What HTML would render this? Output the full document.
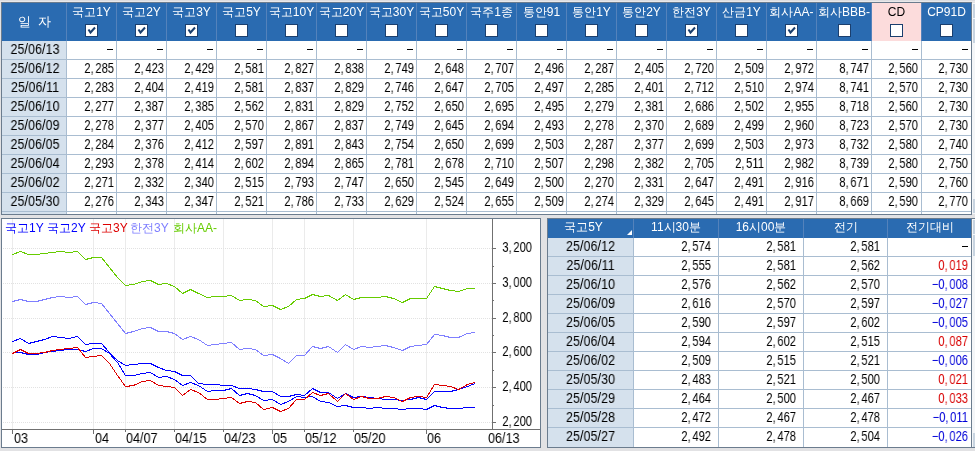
<!DOCTYPE html>
<html><head><meta charset="utf-8"><style>
*{margin:0;padding:0;box-sizing:border-box}
html,body{width:975px;height:451px;overflow:hidden;background:#e2e2e4;font-family:"Liberation Sans",sans-serif;font-size:13px;color:#000}
.a{position:absolute}
.t,.n,.dt{will-change:transform}
.t{position:absolute;white-space:nowrap;line-height:13px}
.n{position:absolute;white-space:nowrap;line-height:14px;font-size:14px;text-align:right;transform:scaleX(.8);transform-origin:100% 50%}
.dt{position:absolute;white-space:nowrap;line-height:14px;font-size:14px;text-align:center;transform:scaleX(.9);transform-origin:50% 50%}
.dash{position:absolute;width:6px;height:1px;background:#000}
.n i{display:inline-block;width:2px}
.hd{color:#fff}
.cb{position:absolute;width:13px;height:13px;background:#fff;border:1px solid #1b3f6e}
</style></head><body>

<div class="a" style="left:0;top:0;width:975px;height:1px;background:#dcdde1"></div>
<div class="a" style="left:0;top:1px;width:975px;height:1px;background:#e9e9eb"></div>
<div class="a" style="left:1px;top:2px;width:971px;height:213px;background:#6b7c8e"></div>
<div class="a" style="left:2px;top:3px;width:969px;height:211px;background:#fff"></div>
<div class="a" style="left:2px;top:3px;width:969px;height:38px;background:#2a6bb1"></div>
<div class="a" style="left:2px;top:41px;width:64px;height:173px;background:#d5e1ed"></div>
<div class="a" style="left:872px;top:3px;width:49px;height:38px;background:#fcdcdc"></div>
<div class="a" style="left:66px;top:3px;width:1px;height:38px;background:#5482bb"></div>
<div class="a" style="left:66px;top:41px;width:1px;height:173px;background:#a9bdd1"></div>
<div class="a" style="left:116px;top:3px;width:1px;height:38px;background:#5482bb"></div>
<div class="a" style="left:116px;top:41px;width:1px;height:173px;background:#a9bdd1"></div>
<div class="a" style="left:166px;top:3px;width:1px;height:38px;background:#5482bb"></div>
<div class="a" style="left:166px;top:41px;width:1px;height:173px;background:#a9bdd1"></div>
<div class="a" style="left:216px;top:3px;width:1px;height:38px;background:#5482bb"></div>
<div class="a" style="left:216px;top:41px;width:1px;height:173px;background:#a9bdd1"></div>
<div class="a" style="left:266px;top:3px;width:1px;height:38px;background:#5482bb"></div>
<div class="a" style="left:266px;top:41px;width:1px;height:173px;background:#a9bdd1"></div>
<div class="a" style="left:316px;top:3px;width:1px;height:38px;background:#5482bb"></div>
<div class="a" style="left:316px;top:41px;width:1px;height:173px;background:#a9bdd1"></div>
<div class="a" style="left:366px;top:3px;width:1px;height:38px;background:#5482bb"></div>
<div class="a" style="left:366px;top:41px;width:1px;height:173px;background:#a9bdd1"></div>
<div class="a" style="left:416px;top:3px;width:1px;height:38px;background:#5482bb"></div>
<div class="a" style="left:416px;top:41px;width:1px;height:173px;background:#a9bdd1"></div>
<div class="a" style="left:466px;top:3px;width:1px;height:38px;background:#5482bb"></div>
<div class="a" style="left:466px;top:41px;width:1px;height:173px;background:#a9bdd1"></div>
<div class="a" style="left:516px;top:3px;width:1px;height:38px;background:#5482bb"></div>
<div class="a" style="left:516px;top:41px;width:1px;height:173px;background:#a9bdd1"></div>
<div class="a" style="left:566px;top:3px;width:1px;height:38px;background:#5482bb"></div>
<div class="a" style="left:566px;top:41px;width:1px;height:173px;background:#a9bdd1"></div>
<div class="a" style="left:616px;top:3px;width:1px;height:38px;background:#5482bb"></div>
<div class="a" style="left:616px;top:41px;width:1px;height:173px;background:#a9bdd1"></div>
<div class="a" style="left:666px;top:3px;width:1px;height:38px;background:#5482bb"></div>
<div class="a" style="left:666px;top:41px;width:1px;height:173px;background:#a9bdd1"></div>
<div class="a" style="left:716px;top:3px;width:1px;height:38px;background:#5482bb"></div>
<div class="a" style="left:716px;top:41px;width:1px;height:173px;background:#a9bdd1"></div>
<div class="a" style="left:766px;top:3px;width:1px;height:38px;background:#5482bb"></div>
<div class="a" style="left:766px;top:41px;width:1px;height:173px;background:#a9bdd1"></div>
<div class="a" style="left:816px;top:3px;width:1px;height:38px;background:#5482bb"></div>
<div class="a" style="left:816px;top:41px;width:1px;height:173px;background:#a9bdd1"></div>
<div class="a" style="left:871px;top:3px;width:1px;height:38px;background:#5482bb"></div>
<div class="a" style="left:871px;top:41px;width:1px;height:173px;background:#a9bdd1"></div>
<div class="a" style="left:921px;top:3px;width:1px;height:38px;background:#5482bb"></div>
<div class="a" style="left:921px;top:41px;width:1px;height:173px;background:#a9bdd1"></div>
<div class="a" style="left:2px;top:59px;width:969px;height:1px;background:#a9bdd1"></div>
<div class="a" style="left:2px;top:78px;width:969px;height:1px;background:#a9bdd1"></div>
<div class="a" style="left:2px;top:97px;width:969px;height:1px;background:#a9bdd1"></div>
<div class="a" style="left:2px;top:116px;width:969px;height:1px;background:#a9bdd1"></div>
<div class="a" style="left:2px;top:135px;width:969px;height:1px;background:#a9bdd1"></div>
<div class="a" style="left:2px;top:154px;width:969px;height:1px;background:#a9bdd1"></div>
<div class="a" style="left:2px;top:173px;width:969px;height:1px;background:#a9bdd1"></div>
<div class="a" style="left:2px;top:192px;width:969px;height:1px;background:#a9bdd1"></div>
<div class="a" style="left:2px;top:211px;width:969px;height:1px;background:#a9bdd1"></div>
<div class="t hd" style="left:18px;top:15px;font-size:13px;letter-spacing:0">일&nbsp;&nbsp;자</div>
<div class="t" style="left:67px;top:6px;width:49px;text-align:center;color:#fff;font-size:12px">국고1Y</div>
<div class="cb" style="left:85px;top:24px"></div>
<svg class="a" style="left:85px;top:24px" width="13" height="13" viewBox="0 0 13 13"><path d="M3.5 5.5 L5.5 8.5 L10 3.5" fill="none" stroke="#1b3f6e" stroke-width="2"/></svg>
<div class="t" style="left:117px;top:6px;width:49px;text-align:center;color:#fff;font-size:12px">국고2Y</div>
<div class="cb" style="left:135px;top:24px"></div>
<svg class="a" style="left:135px;top:24px" width="13" height="13" viewBox="0 0 13 13"><path d="M3.5 5.5 L5.5 8.5 L10 3.5" fill="none" stroke="#1b3f6e" stroke-width="2"/></svg>
<div class="t" style="left:167px;top:6px;width:49px;text-align:center;color:#fff;font-size:12px">국고3Y</div>
<div class="cb" style="left:185px;top:24px"></div>
<svg class="a" style="left:185px;top:24px" width="13" height="13" viewBox="0 0 13 13"><path d="M3.5 5.5 L5.5 8.5 L10 3.5" fill="none" stroke="#1b3f6e" stroke-width="2"/></svg>
<div class="t" style="left:217px;top:6px;width:49px;text-align:center;color:#fff;font-size:12px">국고5Y</div>
<div class="cb" style="left:235px;top:24px"></div>
<div class="t" style="left:267px;top:6px;width:49px;text-align:center;color:#fff;font-size:12px">국고10Y</div>
<div class="cb" style="left:285px;top:24px"></div>
<div class="t" style="left:317px;top:6px;width:49px;text-align:center;color:#fff;font-size:12px">국고20Y</div>
<div class="cb" style="left:335px;top:24px"></div>
<div class="t" style="left:367px;top:6px;width:49px;text-align:center;color:#fff;font-size:12px">국고30Y</div>
<div class="cb" style="left:385px;top:24px"></div>
<div class="t" style="left:417px;top:6px;width:49px;text-align:center;color:#fff;font-size:12px">국고50Y</div>
<div class="cb" style="left:435px;top:24px"></div>
<div class="t" style="left:467px;top:6px;width:49px;text-align:center;color:#fff;font-size:12px">국주1종</div>
<div class="cb" style="left:485px;top:24px"></div>
<div class="t" style="left:517px;top:6px;width:49px;text-align:center;color:#fff;font-size:12px">통안91</div>
<div class="cb" style="left:535px;top:24px"></div>
<div class="t" style="left:567px;top:6px;width:49px;text-align:center;color:#fff;font-size:12px">통안1Y</div>
<div class="cb" style="left:585px;top:24px"></div>
<div class="t" style="left:617px;top:6px;width:49px;text-align:center;color:#fff;font-size:12px">통안2Y</div>
<div class="cb" style="left:635px;top:24px"></div>
<div class="t" style="left:667px;top:6px;width:49px;text-align:center;color:#fff;font-size:12px">한전3Y</div>
<div class="cb" style="left:685px;top:24px"></div>
<svg class="a" style="left:685px;top:24px" width="13" height="13" viewBox="0 0 13 13"><path d="M3.5 5.5 L5.5 8.5 L10 3.5" fill="none" stroke="#1b3f6e" stroke-width="2"/></svg>
<div class="t" style="left:717px;top:6px;width:49px;text-align:center;color:#fff;font-size:12px">산금1Y</div>
<div class="cb" style="left:735px;top:24px"></div>
<div class="t" style="left:767px;top:6px;width:49px;text-align:center;color:#fff;font-size:12px">회사AA-</div>
<div class="cb" style="left:785px;top:24px"></div>
<svg class="a" style="left:785px;top:24px" width="13" height="13" viewBox="0 0 13 13"><path d="M3.5 5.5 L5.5 8.5 L10 3.5" fill="none" stroke="#1b3f6e" stroke-width="2"/></svg>
<div class="t" style="left:817px;top:6px;width:54px;text-align:center;color:#fff;font-size:12px">회사BBB-</div>
<div class="cb" style="left:838px;top:24px"></div>
<div class="t" style="left:872px;top:6px;width:49px;text-align:center;color:#000;font-size:12px">CD</div>
<div class="cb" style="left:890px;top:24px"></div>
<div class="t" style="left:922px;top:6px;width:49px;text-align:center;color:#fff;font-size:12px">CP91D</div>
<div class="cb" style="left:940px;top:24px"></div>
<div class="dt" style="left:3px;top:42px;width:64px">25/06/13</div>
<div class="dash" style="left:107px;top:49px"></div>
<div class="dash" style="left:157px;top:49px"></div>
<div class="dash" style="left:207px;top:49px"></div>
<div class="dash" style="left:257px;top:49px"></div>
<div class="dash" style="left:307px;top:49px"></div>
<div class="dash" style="left:357px;top:49px"></div>
<div class="dash" style="left:407px;top:49px"></div>
<div class="dash" style="left:457px;top:49px"></div>
<div class="dash" style="left:507px;top:49px"></div>
<div class="dash" style="left:557px;top:49px"></div>
<div class="dash" style="left:607px;top:49px"></div>
<div class="dash" style="left:657px;top:49px"></div>
<div class="dash" style="left:707px;top:49px"></div>
<div class="dash" style="left:757px;top:49px"></div>
<div class="dash" style="left:807px;top:49px"></div>
<div class="dash" style="left:862px;top:49px"></div>
<div class="dash" style="left:912px;top:49px"></div>
<div class="dash" style="left:962px;top:49px"></div>
<div class="dt" style="left:3px;top:61px;width:64px">25/06/12</div>
<div class="n" style="left:58px;top:61px;width:56px">2,<i></i>285</div>
<div class="n" style="left:108px;top:61px;width:56px">2,<i></i>423</div>
<div class="n" style="left:158px;top:61px;width:56px">2,<i></i>429</div>
<div class="n" style="left:208px;top:61px;width:56px">2,<i></i>581</div>
<div class="n" style="left:258px;top:61px;width:56px">2,<i></i>827</div>
<div class="n" style="left:308px;top:61px;width:56px">2,<i></i>838</div>
<div class="n" style="left:358px;top:61px;width:56px">2,<i></i>749</div>
<div class="n" style="left:408px;top:61px;width:56px">2,<i></i>648</div>
<div class="n" style="left:458px;top:61px;width:56px">2,<i></i>707</div>
<div class="n" style="left:508px;top:61px;width:56px">2,<i></i>496</div>
<div class="n" style="left:558px;top:61px;width:56px">2,<i></i>287</div>
<div class="n" style="left:608px;top:61px;width:56px">2,<i></i>405</div>
<div class="n" style="left:658px;top:61px;width:56px">2,<i></i>720</div>
<div class="n" style="left:708px;top:61px;width:56px">2,<i></i>509</div>
<div class="n" style="left:758px;top:61px;width:56px">2,<i></i>972</div>
<div class="n" style="left:813px;top:61px;width:56px">8,<i></i>747</div>
<div class="n" style="left:862px;top:61px;width:56px">2,<i></i>560</div>
<div class="n" style="left:912px;top:61px;width:56px">2,<i></i>730</div>
<div class="dt" style="left:3px;top:80px;width:64px">25/06/11</div>
<div class="n" style="left:58px;top:80px;width:56px">2,<i></i>283</div>
<div class="n" style="left:108px;top:80px;width:56px">2,<i></i>404</div>
<div class="n" style="left:158px;top:80px;width:56px">2,<i></i>419</div>
<div class="n" style="left:208px;top:80px;width:56px">2,<i></i>581</div>
<div class="n" style="left:258px;top:80px;width:56px">2,<i></i>837</div>
<div class="n" style="left:308px;top:80px;width:56px">2,<i></i>829</div>
<div class="n" style="left:358px;top:80px;width:56px">2,<i></i>746</div>
<div class="n" style="left:408px;top:80px;width:56px">2,<i></i>647</div>
<div class="n" style="left:458px;top:80px;width:56px">2,<i></i>705</div>
<div class="n" style="left:508px;top:80px;width:56px">2,<i></i>497</div>
<div class="n" style="left:558px;top:80px;width:56px">2,<i></i>285</div>
<div class="n" style="left:608px;top:80px;width:56px">2,<i></i>401</div>
<div class="n" style="left:658px;top:80px;width:56px">2,<i></i>712</div>
<div class="n" style="left:708px;top:80px;width:56px">2,<i></i>510</div>
<div class="n" style="left:758px;top:80px;width:56px">2,<i></i>974</div>
<div class="n" style="left:813px;top:80px;width:56px">8,<i></i>741</div>
<div class="n" style="left:862px;top:80px;width:56px">2,<i></i>570</div>
<div class="n" style="left:912px;top:80px;width:56px">2,<i></i>730</div>
<div class="dt" style="left:3px;top:99px;width:64px">25/06/10</div>
<div class="n" style="left:58px;top:99px;width:56px">2,<i></i>277</div>
<div class="n" style="left:108px;top:99px;width:56px">2,<i></i>387</div>
<div class="n" style="left:158px;top:99px;width:56px">2,<i></i>385</div>
<div class="n" style="left:208px;top:99px;width:56px">2,<i></i>562</div>
<div class="n" style="left:258px;top:99px;width:56px">2,<i></i>831</div>
<div class="n" style="left:308px;top:99px;width:56px">2,<i></i>829</div>
<div class="n" style="left:358px;top:99px;width:56px">2,<i></i>752</div>
<div class="n" style="left:408px;top:99px;width:56px">2,<i></i>650</div>
<div class="n" style="left:458px;top:99px;width:56px">2,<i></i>695</div>
<div class="n" style="left:508px;top:99px;width:56px">2,<i></i>495</div>
<div class="n" style="left:558px;top:99px;width:56px">2,<i></i>279</div>
<div class="n" style="left:608px;top:99px;width:56px">2,<i></i>381</div>
<div class="n" style="left:658px;top:99px;width:56px">2,<i></i>686</div>
<div class="n" style="left:708px;top:99px;width:56px">2,<i></i>502</div>
<div class="n" style="left:758px;top:99px;width:56px">2,<i></i>955</div>
<div class="n" style="left:813px;top:99px;width:56px">8,<i></i>718</div>
<div class="n" style="left:862px;top:99px;width:56px">2,<i></i>560</div>
<div class="n" style="left:912px;top:99px;width:56px">2,<i></i>730</div>
<div class="dt" style="left:3px;top:118px;width:64px">25/06/09</div>
<div class="n" style="left:58px;top:118px;width:56px">2,<i></i>278</div>
<div class="n" style="left:108px;top:118px;width:56px">2,<i></i>377</div>
<div class="n" style="left:158px;top:118px;width:56px">2,<i></i>405</div>
<div class="n" style="left:208px;top:118px;width:56px">2,<i></i>570</div>
<div class="n" style="left:258px;top:118px;width:56px">2,<i></i>867</div>
<div class="n" style="left:308px;top:118px;width:56px">2,<i></i>837</div>
<div class="n" style="left:358px;top:118px;width:56px">2,<i></i>749</div>
<div class="n" style="left:408px;top:118px;width:56px">2,<i></i>645</div>
<div class="n" style="left:458px;top:118px;width:56px">2,<i></i>694</div>
<div class="n" style="left:508px;top:118px;width:56px">2,<i></i>493</div>
<div class="n" style="left:558px;top:118px;width:56px">2,<i></i>278</div>
<div class="n" style="left:608px;top:118px;width:56px">2,<i></i>370</div>
<div class="n" style="left:658px;top:118px;width:56px">2,<i></i>689</div>
<div class="n" style="left:708px;top:118px;width:56px">2,<i></i>499</div>
<div class="n" style="left:758px;top:118px;width:56px">2,<i></i>960</div>
<div class="n" style="left:813px;top:118px;width:56px">8,<i></i>723</div>
<div class="n" style="left:862px;top:118px;width:56px">2,<i></i>570</div>
<div class="n" style="left:912px;top:118px;width:56px">2,<i></i>730</div>
<div class="dt" style="left:3px;top:137px;width:64px">25/06/05</div>
<div class="n" style="left:58px;top:137px;width:56px">2,<i></i>284</div>
<div class="n" style="left:108px;top:137px;width:56px">2,<i></i>376</div>
<div class="n" style="left:158px;top:137px;width:56px">2,<i></i>412</div>
<div class="n" style="left:208px;top:137px;width:56px">2,<i></i>597</div>
<div class="n" style="left:258px;top:137px;width:56px">2,<i></i>891</div>
<div class="n" style="left:308px;top:137px;width:56px">2,<i></i>843</div>
<div class="n" style="left:358px;top:137px;width:56px">2,<i></i>754</div>
<div class="n" style="left:408px;top:137px;width:56px">2,<i></i>650</div>
<div class="n" style="left:458px;top:137px;width:56px">2,<i></i>699</div>
<div class="n" style="left:508px;top:137px;width:56px">2,<i></i>503</div>
<div class="n" style="left:558px;top:137px;width:56px">2,<i></i>287</div>
<div class="n" style="left:608px;top:137px;width:56px">2,<i></i>377</div>
<div class="n" style="left:658px;top:137px;width:56px">2,<i></i>699</div>
<div class="n" style="left:708px;top:137px;width:56px">2,<i></i>503</div>
<div class="n" style="left:758px;top:137px;width:56px">2,<i></i>973</div>
<div class="n" style="left:813px;top:137px;width:56px">8,<i></i>732</div>
<div class="n" style="left:862px;top:137px;width:56px">2,<i></i>580</div>
<div class="n" style="left:912px;top:137px;width:56px">2,<i></i>740</div>
<div class="dt" style="left:3px;top:156px;width:64px">25/06/04</div>
<div class="n" style="left:58px;top:156px;width:56px">2,<i></i>293</div>
<div class="n" style="left:108px;top:156px;width:56px">2,<i></i>378</div>
<div class="n" style="left:158px;top:156px;width:56px">2,<i></i>414</div>
<div class="n" style="left:208px;top:156px;width:56px">2,<i></i>602</div>
<div class="n" style="left:258px;top:156px;width:56px">2,<i></i>894</div>
<div class="n" style="left:308px;top:156px;width:56px">2,<i></i>865</div>
<div class="n" style="left:358px;top:156px;width:56px">2,<i></i>781</div>
<div class="n" style="left:408px;top:156px;width:56px">2,<i></i>678</div>
<div class="n" style="left:458px;top:156px;width:56px">2,<i></i>710</div>
<div class="n" style="left:508px;top:156px;width:56px">2,<i></i>507</div>
<div class="n" style="left:558px;top:156px;width:56px">2,<i></i>298</div>
<div class="n" style="left:608px;top:156px;width:56px">2,<i></i>382</div>
<div class="n" style="left:658px;top:156px;width:56px">2,<i></i>705</div>
<div class="n" style="left:708px;top:156px;width:56px">2,<i></i>511</div>
<div class="n" style="left:758px;top:156px;width:56px">2,<i></i>982</div>
<div class="n" style="left:813px;top:156px;width:56px">8,<i></i>739</div>
<div class="n" style="left:862px;top:156px;width:56px">2,<i></i>580</div>
<div class="n" style="left:912px;top:156px;width:56px">2,<i></i>750</div>
<div class="dt" style="left:3px;top:175px;width:64px">25/06/02</div>
<div class="n" style="left:58px;top:175px;width:56px">2,<i></i>271</div>
<div class="n" style="left:108px;top:175px;width:56px">2,<i></i>332</div>
<div class="n" style="left:158px;top:175px;width:56px">2,<i></i>340</div>
<div class="n" style="left:208px;top:175px;width:56px">2,<i></i>515</div>
<div class="n" style="left:258px;top:175px;width:56px">2,<i></i>793</div>
<div class="n" style="left:308px;top:175px;width:56px">2,<i></i>747</div>
<div class="n" style="left:358px;top:175px;width:56px">2,<i></i>650</div>
<div class="n" style="left:408px;top:175px;width:56px">2,<i></i>545</div>
<div class="n" style="left:458px;top:175px;width:56px">2,<i></i>649</div>
<div class="n" style="left:508px;top:175px;width:56px">2,<i></i>500</div>
<div class="n" style="left:558px;top:175px;width:56px">2,<i></i>270</div>
<div class="n" style="left:608px;top:175px;width:56px">2,<i></i>331</div>
<div class="n" style="left:658px;top:175px;width:56px">2,<i></i>647</div>
<div class="n" style="left:708px;top:175px;width:56px">2,<i></i>491</div>
<div class="n" style="left:758px;top:175px;width:56px">2,<i></i>916</div>
<div class="n" style="left:813px;top:175px;width:56px">8,<i></i>671</div>
<div class="n" style="left:862px;top:175px;width:56px">2,<i></i>590</div>
<div class="n" style="left:912px;top:175px;width:56px">2,<i></i>760</div>
<div class="dt" style="left:3px;top:194px;width:64px">25/05/30</div>
<div class="n" style="left:58px;top:194px;width:56px">2,<i></i>276</div>
<div class="n" style="left:108px;top:194px;width:56px">2,<i></i>343</div>
<div class="n" style="left:158px;top:194px;width:56px">2,<i></i>347</div>
<div class="n" style="left:208px;top:194px;width:56px">2,<i></i>521</div>
<div class="n" style="left:258px;top:194px;width:56px">2,<i></i>786</div>
<div class="n" style="left:308px;top:194px;width:56px">2,<i></i>733</div>
<div class="n" style="left:358px;top:194px;width:56px">2,<i></i>629</div>
<div class="n" style="left:408px;top:194px;width:56px">2,<i></i>524</div>
<div class="n" style="left:458px;top:194px;width:56px">2,<i></i>655</div>
<div class="n" style="left:508px;top:194px;width:56px">2,<i></i>509</div>
<div class="n" style="left:558px;top:194px;width:56px">2,<i></i>274</div>
<div class="n" style="left:608px;top:194px;width:56px">2,<i></i>329</div>
<div class="n" style="left:658px;top:194px;width:56px">2,<i></i>645</div>
<div class="n" style="left:708px;top:194px;width:56px">2,<i></i>491</div>
<div class="n" style="left:758px;top:194px;width:56px">2,<i></i>917</div>
<div class="n" style="left:813px;top:194px;width:56px">8,<i></i>669</div>
<div class="n" style="left:862px;top:194px;width:56px">2,<i></i>590</div>
<div class="n" style="left:912px;top:194px;width:56px">2,<i></i>770</div>
<div class="a" style="left:972px;top:3px;width:3px;height:211px;background:#f4f6f8"></div>
<div class="a" style="left:973px;top:4px;width:2px;height:14px;background:#c8d4e0"></div>
<div class="a" style="left:973px;top:19px;width:2px;height:24px;background:#c8d4e0"></div>
<div class="a" style="left:973px;top:199px;width:2px;height:14px;background:#c8d4e0"></div>
<div class="a" style="left:1px;top:218px;width:540px;height:230px;background:#6b7c8e"></div>
<div class="a" style="left:2px;top:219px;width:538px;height:228px;background:#fff"></div>
<svg class="a" style="left:0;top:0" width="975" height="451" viewBox="0 0 975 451">
<rect x="12" y="219" width="1" height="210" fill="#ebebeb"/>
<rect x="93" y="219" width="1" height="210" fill="#ebebeb"/>
<rect x="125" y="219" width="1" height="210" fill="#ebebeb"/>
<rect x="174" y="219" width="1" height="210" fill="#ebebeb"/>
<rect x="223" y="219" width="1" height="210" fill="#ebebeb"/>
<rect x="272" y="219" width="1" height="210" fill="#ebebeb"/>
<rect x="304" y="219" width="1" height="210" fill="#ebebeb"/>
<rect x="353" y="219" width="1" height="210" fill="#ebebeb"/>
<rect x="426" y="219" width="1" height="210" fill="#ebebeb"/>
<line x1="2" y1="248.5" x2="492" y2="248.5" stroke="#e2e2e2" stroke-width="1" stroke-dasharray="1 1" stroke-dashoffset="1" shape-rendering="crispEdges"/>
<line x1="2" y1="283.5" x2="492" y2="283.5" stroke="#e2e2e2" stroke-width="1" stroke-dasharray="1 1" stroke-dashoffset="1" shape-rendering="crispEdges"/>
<line x1="2" y1="318.5" x2="492" y2="318.5" stroke="#e2e2e2" stroke-width="1" stroke-dasharray="1 1" stroke-dashoffset="1" shape-rendering="crispEdges"/>
<line x1="2" y1="352.5" x2="492" y2="352.5" stroke="#e2e2e2" stroke-width="1" stroke-dasharray="1 1" stroke-dashoffset="1" shape-rendering="crispEdges"/>
<line x1="2" y1="387.5" x2="492" y2="387.5" stroke="#e2e2e2" stroke-width="1" stroke-dasharray="1 1" stroke-dashoffset="1" shape-rendering="crispEdges"/>
<line x1="2" y1="422.5" x2="492" y2="422.5" stroke="#e2e2e2" stroke-width="1" stroke-dasharray="1 1" stroke-dashoffset="1" shape-rendering="crispEdges"/>
<rect x="492" y="219" width="1" height="211" fill="#707070"/>
<rect x="2" y="429" width="538" height="1" fill="#707070"/>
<rect x="493" y="248" width="3" height="1" fill="#707070"/>
<rect x="493" y="283" width="3" height="1" fill="#707070"/>
<rect x="493" y="318" width="3" height="1" fill="#707070"/>
<rect x="493" y="352" width="3" height="1" fill="#707070"/>
<rect x="493" y="387" width="3" height="1" fill="#707070"/>
<rect x="493" y="422" width="3" height="1" fill="#707070"/>
<rect x="493" y="266" width="1" height="1" fill="#707070"/>
<rect x="493" y="300" width="1" height="1" fill="#707070"/>
<rect x="493" y="335" width="1" height="1" fill="#707070"/>
<rect x="493" y="370" width="1" height="1" fill="#707070"/>
<rect x="493" y="405" width="1" height="1" fill="#707070"/>
<rect x="12" y="430" width="1" height="4" fill="#707070"/>
<rect x="93" y="430" width="1" height="4" fill="#707070"/>
<rect x="125" y="430" width="1" height="2" fill="#707070"/>
<rect x="174" y="430" width="1" height="2" fill="#707070"/>
<rect x="223" y="430" width="1" height="2" fill="#707070"/>
<rect x="272" y="430" width="1" height="4" fill="#707070"/>
<rect x="304" y="430" width="1" height="2" fill="#707070"/>
<rect x="353" y="430" width="1" height="2" fill="#707070"/>
<rect x="426" y="430" width="1" height="4" fill="#707070"/>
<polyline points="12.5,301.5 20.5,299.5 28.5,301.5 36.5,301.5 44.5,299.5 52.5,297.5 60.5,296.5 68.5,297.5 77.5,296.5 85.5,304.5 93.5,302.5 101.5,303.5 109.5,313.5 117.5,323.5 125.5,333.5 133.5,331.5 142.5,328.5 150.5,327.5 158.5,331.5 166.5,331.5 174.5,333.5 182.5,339.5 190.5,336.5 198.5,339.5 207.5,345.5 215.5,344.5 223.5,343.5 231.5,342.5 239.5,349.5 247.5,348.5 255.5,349.5 263.5,355.5 272.5,354.5 280.5,358.5 288.5,363.5 296.5,355.5 304.5,355.5 312.5,346.5 320.5,348.5 328.5,346.5 337.5,352.5 345.5,344.5 353.5,349.5 361.5,346.5 369.5,347.5 377.5,346.5 385.5,345.5 393.5,347.5 402.5,350.5 410.5,346.5 418.5,345.5 426.5,344.5 434.5,334.5 442.5,335.5 450.5,337.5 458.5,337.5 467.5,333.5 475.0,332.5" fill="none" stroke="#7f7fff" stroke-width="1" shape-rendering="crispEdges"/>
<polyline points="12.5,254.5 20.5,251.5 28.5,254.5 36.5,254.5 44.5,253.5 52.5,252.5 60.5,251.5 68.5,252.5 77.5,251.5 85.5,259.5 93.5,257.5 101.5,257.5 109.5,267.5 117.5,277.5 125.5,285.5 133.5,284.5 142.5,281.5 150.5,280.5 158.5,284.5 166.5,283.5 174.5,286.5 182.5,293.5 190.5,289.5 198.5,293.5 207.5,297.5 215.5,296.5 223.5,296.5 231.5,295.5 239.5,300.5 247.5,299.5 255.5,300.5 263.5,306.5 272.5,305.5 280.5,309.5 288.5,306.5 296.5,299.5 304.5,298.5 312.5,294.5 320.5,296.5 328.5,295.5 337.5,300.5 345.5,294.5 353.5,299.5 361.5,297.5 369.5,297.5 377.5,297.5 385.5,296.5 393.5,298.5 402.5,302.5 410.5,298.5 418.5,298.5 426.5,298.5 434.5,286.5 442.5,288.5 450.5,290.5 458.5,291.5 467.5,288.5 475.0,288.5" fill="none" stroke="#66cc00" stroke-width="1" shape-rendering="crispEdges"/>
<polyline points="12.5,352.5 20.5,352.5 28.5,354.5 36.5,354.5 44.5,352.5 52.5,351.5 60.5,350.5 68.5,349.5 77.5,349.5 85.5,351.5 93.5,348.5 101.5,348.5 109.5,353.5 117.5,362.5 125.5,375.5 133.5,375.5 142.5,373.5 150.5,372.5 158.5,377.5 166.5,376.5 174.5,379.5 182.5,385.5 190.5,382.5 198.5,385.5 207.5,391.5 215.5,390.5 223.5,390.5 231.5,388.5 239.5,395.5 247.5,393.5 255.5,395.5 263.5,400.5 272.5,399.5 280.5,404.5 288.5,401.5 296.5,396.5 304.5,397.5 312.5,396.5 320.5,401.5 328.5,402.5 337.5,406.5 345.5,405.5 353.5,407.5 361.5,407.5 369.5,408.5 377.5,407.5 385.5,408.5 393.5,408.5 402.5,409.5 410.5,408.5 418.5,408.5 426.5,409.5 434.5,405.5 442.5,407.5 450.5,408.5 458.5,408.5 467.5,407.5 475.0,407.5" fill="none" stroke="#0000ff" stroke-width="1" shape-rendering="crispEdges"/>
<polyline points="12.5,341.5 20.5,338.5 28.5,343.5 36.5,341.5 44.5,339.5 52.5,336.5 60.5,337.5 68.5,338.5 77.5,336.5 85.5,344.5 93.5,343.5 101.5,343.5 109.5,352.5 117.5,360.5 125.5,365.5 133.5,364.5 142.5,363.5 150.5,363.5 158.5,367.5 166.5,370.5 174.5,371.5 182.5,375.5 190.5,375.5 198.5,383.5 207.5,384.5 215.5,384.5 223.5,385.5 231.5,385.5 239.5,388.5 247.5,388.5 255.5,389.5 263.5,391.5 272.5,391.5 280.5,396.5 288.5,396.5 296.5,394.5 304.5,395.5 312.5,388.5 320.5,392.5 328.5,392.5 337.5,398.5 345.5,393.5 353.5,397.5 361.5,396.5 369.5,397.5 377.5,398.5 385.5,399.5 393.5,399.5 402.5,400.5 410.5,399.5 418.5,397.5 426.5,399.5 434.5,391.5 442.5,391.5 450.5,391.5 458.5,389.5 467.5,386.5 475.0,383.5" fill="none" stroke="#0000ff" stroke-width="1" shape-rendering="crispEdges"/>
<polyline points="12.5,353.5 20.5,349.5 28.5,353.5 36.5,353.5 44.5,352.5 52.5,350.5 60.5,349.5 68.5,348.5 77.5,347.5 85.5,357.5 93.5,356.5 101.5,355.5 109.5,363.5 117.5,375.5 125.5,386.5 133.5,385.5 142.5,381.5 150.5,380.5 158.5,385.5 166.5,386.5 174.5,387.5 182.5,395.5 190.5,389.5 198.5,392.5 207.5,399.5 215.5,399.5 223.5,398.5 231.5,397.5 239.5,403.5 247.5,401.5 255.5,402.5 263.5,409.5 272.5,407.5 280.5,411.5 288.5,408.5 296.5,399.5 304.5,399.5 312.5,392.5 320.5,395.5 328.5,393.5 337.5,401.5 345.5,393.5 353.5,399.5 361.5,396.5 369.5,398.5 377.5,398.5 385.5,396.5 393.5,397.5 402.5,401.5 410.5,397.5 418.5,396.5 426.5,397.5 434.5,384.5 442.5,385.5 450.5,386.5 458.5,389.5 467.5,384.5 475.0,382.5" fill="none" stroke="#dd0000" stroke-width="1" shape-rendering="crispEdges"/>
</svg>
<div class="t" style="left:5px;top:222px;color:#0000ff;font-size:12px">국고1Y</div>
<div class="t" style="left:47px;top:222px;color:#0000ff;font-size:12px">국고2Y</div>
<div class="t" style="left:89px;top:222px;color:#dd0000;font-size:12px">국고3Y</div>
<div class="t" style="left:130px;top:222px;color:#7f7fff;font-size:12px">한전3Y</div>
<div class="t" style="left:173px;top:222px;color:#66cc00;font-size:12px">회사AA-</div>
<div class="dt" style="left:14px;top:431px;text-align:left;transform-origin:0 50%">03</div>
<div class="dt" style="left:95px;top:431px;text-align:left;transform-origin:0 50%">04</div>
<div class="dt" style="left:126px;top:431px;text-align:left;transform-origin:0 50%">04/07</div>
<div class="dt" style="left:175px;top:431px;text-align:left;transform-origin:0 50%">04/15</div>
<div class="dt" style="left:224px;top:431px;text-align:left;transform-origin:0 50%">04/23</div>
<div class="dt" style="left:273px;top:431px;text-align:left;transform-origin:0 50%">05</div>
<div class="dt" style="left:305px;top:431px;text-align:left;transform-origin:0 50%">05/12</div>
<div class="dt" style="left:354px;top:431px;text-align:left;transform-origin:0 50%">05/20</div>
<div class="dt" style="left:427px;top:431px;text-align:left;transform-origin:0 50%">06</div>
<div class="dt" style="left:488px;top:431px;text-align:left;transform-origin:0 50%">06/13</div>
<div class="n" style="left:472px;top:240px;width:60px">3,<i></i>200</div>
<div class="n" style="left:472px;top:275px;width:60px">3,<i></i>000</div>
<div class="n" style="left:472px;top:310px;width:60px">2,<i></i>800</div>
<div class="n" style="left:472px;top:344px;width:60px">2,<i></i>600</div>
<div class="n" style="left:472px;top:379px;width:60px">2,<i></i>400</div>
<div class="n" style="left:472px;top:414px;width:60px">2,<i></i>200</div>
<div class="a" style="left:547px;top:218px;width:428px;height:230px;background:#6b7c8e"></div>
<div class="a" style="left:548px;top:219px;width:423px;height:228px;background:#fff"></div>
<div class="a" style="left:548px;top:219px;width:423px;height:19px;background:#2a6bb1"></div>
<div class="a" style="left:548px;top:238px;width:85px;height:209px;background:#d5e1ed"></div>
<div class="a" style="left:633px;top:219px;width:1px;height:19px;background:#5482bb"></div>
<div class="a" style="left:633px;top:238px;width:1px;height:209px;background:#a9bdd1"></div>
<div class="a" style="left:718px;top:219px;width:1px;height:19px;background:#5482bb"></div>
<div class="a" style="left:718px;top:238px;width:1px;height:209px;background:#a9bdd1"></div>
<div class="a" style="left:803px;top:219px;width:1px;height:19px;background:#5482bb"></div>
<div class="a" style="left:803px;top:238px;width:1px;height:209px;background:#a9bdd1"></div>
<div class="a" style="left:887px;top:219px;width:1px;height:19px;background:#5482bb"></div>
<div class="a" style="left:887px;top:238px;width:1px;height:209px;background:#a9bdd1"></div>
<div class="a" style="left:548px;top:256px;width:423px;height:1px;background:#a9bdd1"></div>
<div class="a" style="left:548px;top:275px;width:423px;height:1px;background:#a9bdd1"></div>
<div class="a" style="left:548px;top:294px;width:423px;height:1px;background:#a9bdd1"></div>
<div class="a" style="left:548px;top:313px;width:423px;height:1px;background:#a9bdd1"></div>
<div class="a" style="left:548px;top:332px;width:423px;height:1px;background:#a9bdd1"></div>
<div class="a" style="left:548px;top:351px;width:423px;height:1px;background:#a9bdd1"></div>
<div class="a" style="left:548px;top:370px;width:423px;height:1px;background:#a9bdd1"></div>
<div class="a" style="left:548px;top:389px;width:423px;height:1px;background:#a9bdd1"></div>
<div class="a" style="left:548px;top:408px;width:423px;height:1px;background:#a9bdd1"></div>
<div class="a" style="left:548px;top:427px;width:423px;height:1px;background:#a9bdd1"></div>
<div class="t hd" style="left:541px;top:221px;width:85px;text-align:center;font-size:12px">국고5Y</div>
<div class="t hd" style="left:634px;top:221px;width:84px;text-align:center;font-size:12px">11시30분</div>
<div class="t hd" style="left:719px;top:221px;width:84px;text-align:center;font-size:12px">16시00분</div>
<div class="t hd" style="left:804px;top:221px;width:83px;text-align:center;font-size:12px">전기</div>
<div class="t hd" style="left:888px;top:221px;width:83px;text-align:center;font-size:12px">전기대비</div>
<svg class="a" style="left:627px;top:230px" width="5" height="5"><path d="M5 0 L5 5 L0 5 Z" fill="#fff"/></svg>
<div class="dt" style="left:548px;top:239px;width:85px">25/06/12</div>
<div class="n" style="left:635px;top:239px;width:76px;color:#000">2,<i></i>574</div>
<div class="n" style="left:720px;top:239px;width:76px;color:#000">2,<i></i>581</div>
<div class="n" style="left:804px;top:239px;width:76px;color:#000">2,<i></i>581</div>
<div class="dash" style="left:962px;top:246px"></div>
<div class="dt" style="left:548px;top:258px;width:85px">25/06/11</div>
<div class="n" style="left:635px;top:258px;width:76px;color:#000">2,<i></i>555</div>
<div class="n" style="left:720px;top:258px;width:76px;color:#000">2,<i></i>581</div>
<div class="n" style="left:804px;top:258px;width:76px;color:#000">2,<i></i>562</div>
<div class="n" style="left:892px;top:258px;width:76px;color:#d80000">0,<i></i>019</div>
<div class="dt" style="left:548px;top:277px;width:85px">25/06/10</div>
<div class="n" style="left:635px;top:277px;width:76px;color:#000">2,<i></i>576</div>
<div class="n" style="left:720px;top:277px;width:76px;color:#000">2,<i></i>562</div>
<div class="n" style="left:804px;top:277px;width:76px;color:#000">2,<i></i>570</div>
<div class="n" style="left:892px;top:277px;width:76px;color:#0000d8">&minus;0,<i></i>008</div>
<div class="dt" style="left:548px;top:296px;width:85px">25/06/09</div>
<div class="n" style="left:635px;top:296px;width:76px;color:#000">2,<i></i>616</div>
<div class="n" style="left:720px;top:296px;width:76px;color:#000">2,<i></i>570</div>
<div class="n" style="left:804px;top:296px;width:76px;color:#000">2,<i></i>597</div>
<div class="n" style="left:892px;top:296px;width:76px;color:#0000d8">&minus;0,<i></i>027</div>
<div class="dt" style="left:548px;top:315px;width:85px">25/06/05</div>
<div class="n" style="left:635px;top:315px;width:76px;color:#000">2,<i></i>590</div>
<div class="n" style="left:720px;top:315px;width:76px;color:#000">2,<i></i>597</div>
<div class="n" style="left:804px;top:315px;width:76px;color:#000">2,<i></i>602</div>
<div class="n" style="left:892px;top:315px;width:76px;color:#0000d8">&minus;0,<i></i>005</div>
<div class="dt" style="left:548px;top:334px;width:85px">25/06/04</div>
<div class="n" style="left:635px;top:334px;width:76px;color:#000">2,<i></i>594</div>
<div class="n" style="left:720px;top:334px;width:76px;color:#000">2,<i></i>602</div>
<div class="n" style="left:804px;top:334px;width:76px;color:#000">2,<i></i>515</div>
<div class="n" style="left:892px;top:334px;width:76px;color:#d80000">0,<i></i>087</div>
<div class="dt" style="left:548px;top:353px;width:85px">25/06/02</div>
<div class="n" style="left:635px;top:353px;width:76px;color:#000">2,<i></i>509</div>
<div class="n" style="left:720px;top:353px;width:76px;color:#000">2,<i></i>515</div>
<div class="n" style="left:804px;top:353px;width:76px;color:#000">2,<i></i>521</div>
<div class="n" style="left:892px;top:353px;width:76px;color:#0000d8">&minus;0,<i></i>006</div>
<div class="dt" style="left:548px;top:372px;width:85px">25/05/30</div>
<div class="n" style="left:635px;top:372px;width:76px;color:#000">2,<i></i>483</div>
<div class="n" style="left:720px;top:372px;width:76px;color:#000">2,<i></i>521</div>
<div class="n" style="left:804px;top:372px;width:76px;color:#000">2,<i></i>500</div>
<div class="n" style="left:892px;top:372px;width:76px;color:#d80000">0,<i></i>021</div>
<div class="dt" style="left:548px;top:391px;width:85px">25/05/29</div>
<div class="n" style="left:635px;top:391px;width:76px;color:#000">2,<i></i>464</div>
<div class="n" style="left:720px;top:391px;width:76px;color:#000">2,<i></i>500</div>
<div class="n" style="left:804px;top:391px;width:76px;color:#000">2,<i></i>467</div>
<div class="n" style="left:892px;top:391px;width:76px;color:#d80000">0,<i></i>033</div>
<div class="dt" style="left:548px;top:410px;width:85px">25/05/28</div>
<div class="n" style="left:635px;top:410px;width:76px;color:#000">2,<i></i>472</div>
<div class="n" style="left:720px;top:410px;width:76px;color:#000">2,<i></i>467</div>
<div class="n" style="left:804px;top:410px;width:76px;color:#000">2,<i></i>478</div>
<div class="n" style="left:892px;top:410px;width:76px;color:#0000d8">&minus;0,<i></i>011</div>
<div class="dt" style="left:548px;top:429px;width:85px">25/05/27</div>
<div class="n" style="left:635px;top:429px;width:76px;color:#000">2,<i></i>492</div>
<div class="n" style="left:720px;top:429px;width:76px;color:#000">2,<i></i>478</div>
<div class="n" style="left:804px;top:429px;width:76px;color:#000">2,<i></i>504</div>
<div class="n" style="left:892px;top:429px;width:76px;color:#0000d8">&minus;0,<i></i>026</div>
<div class="a" style="left:972px;top:219px;width:3px;height:228px;background:#f4f6f8"></div>
<div class="a" style="left:973px;top:220px;width:2px;height:14px;background:#c8d4e0"></div>
<div class="a" style="left:973px;top:433px;width:2px;height:14px;background:#c8d4e0"></div>
<div class="a" style="left:973px;top:235px;width:2px;height:21px;background:#c8d4e0"></div>
</body></html>
